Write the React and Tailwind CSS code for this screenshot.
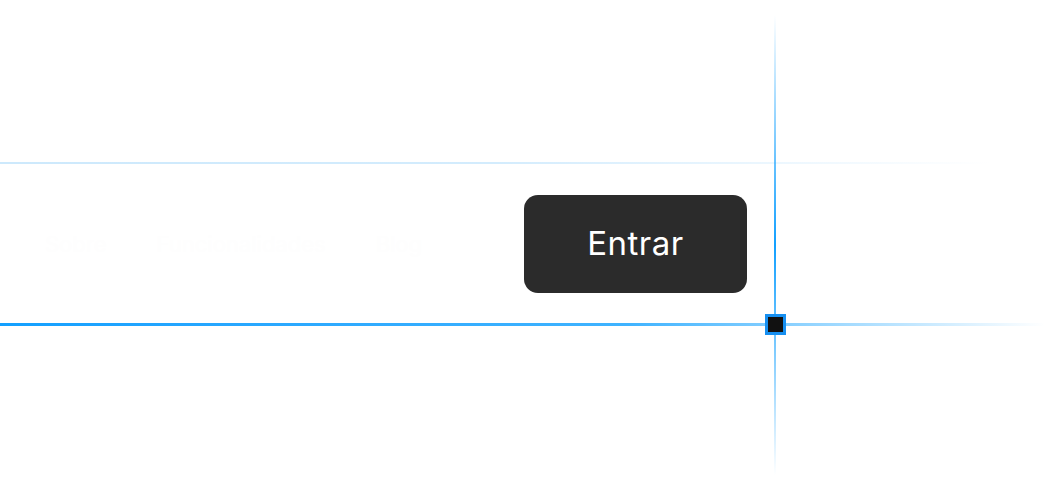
import React from 'react';

const App = () => {
  return (
    <div className="relative w-[1058px] h-[492px] overflow-hidden bg-white" style={{ fontFamily: 'Inter, "Noto Sans", sans-serif' }}>
      {/* guide lines */}
      <div className="absolute left-0 top-[162px] w-[990px] h-[2px] bg-gradient-to-r from-[#cde9fc] via-[#d3ecfd] to-transparent" />
      <div className="absolute left-0 top-[323px] w-[1045px] h-[3px] bg-gradient-to-r from-[#12a0ff] via-[#3fb3ff] via-60% to-transparent" />
      <div className="absolute left-[774px] top-[15px] w-[2px] h-[460px] bg-gradient-to-b from-transparent via-[#12a0ff] to-transparent" />
      <div className="absolute left-[765px] top-[314px] w-[21px] h-[21px] border-[3px] border-[#168ff0] bg-[#111111]" />

      <div className="pt-[195px] pr-[311px] flex items-center h-[293px]">
        <nav className="flex items-center gap-[50px] pl-[45px] text-[22px] text-[#fefefe]">
          <span>Sobre</span>
          <span>Funcionalidades</span>
          <span>Blog</span>
        </nav>
        <button className="ml-auto w-[223px] h-[98px] rounded-[14px] bg-[#2b2b2b] text-white text-[33px] tracking-[0.5px] flex items-center justify-center">
          Entrar
        </button>
      </div>
    </div>
  );
};

export default App;
